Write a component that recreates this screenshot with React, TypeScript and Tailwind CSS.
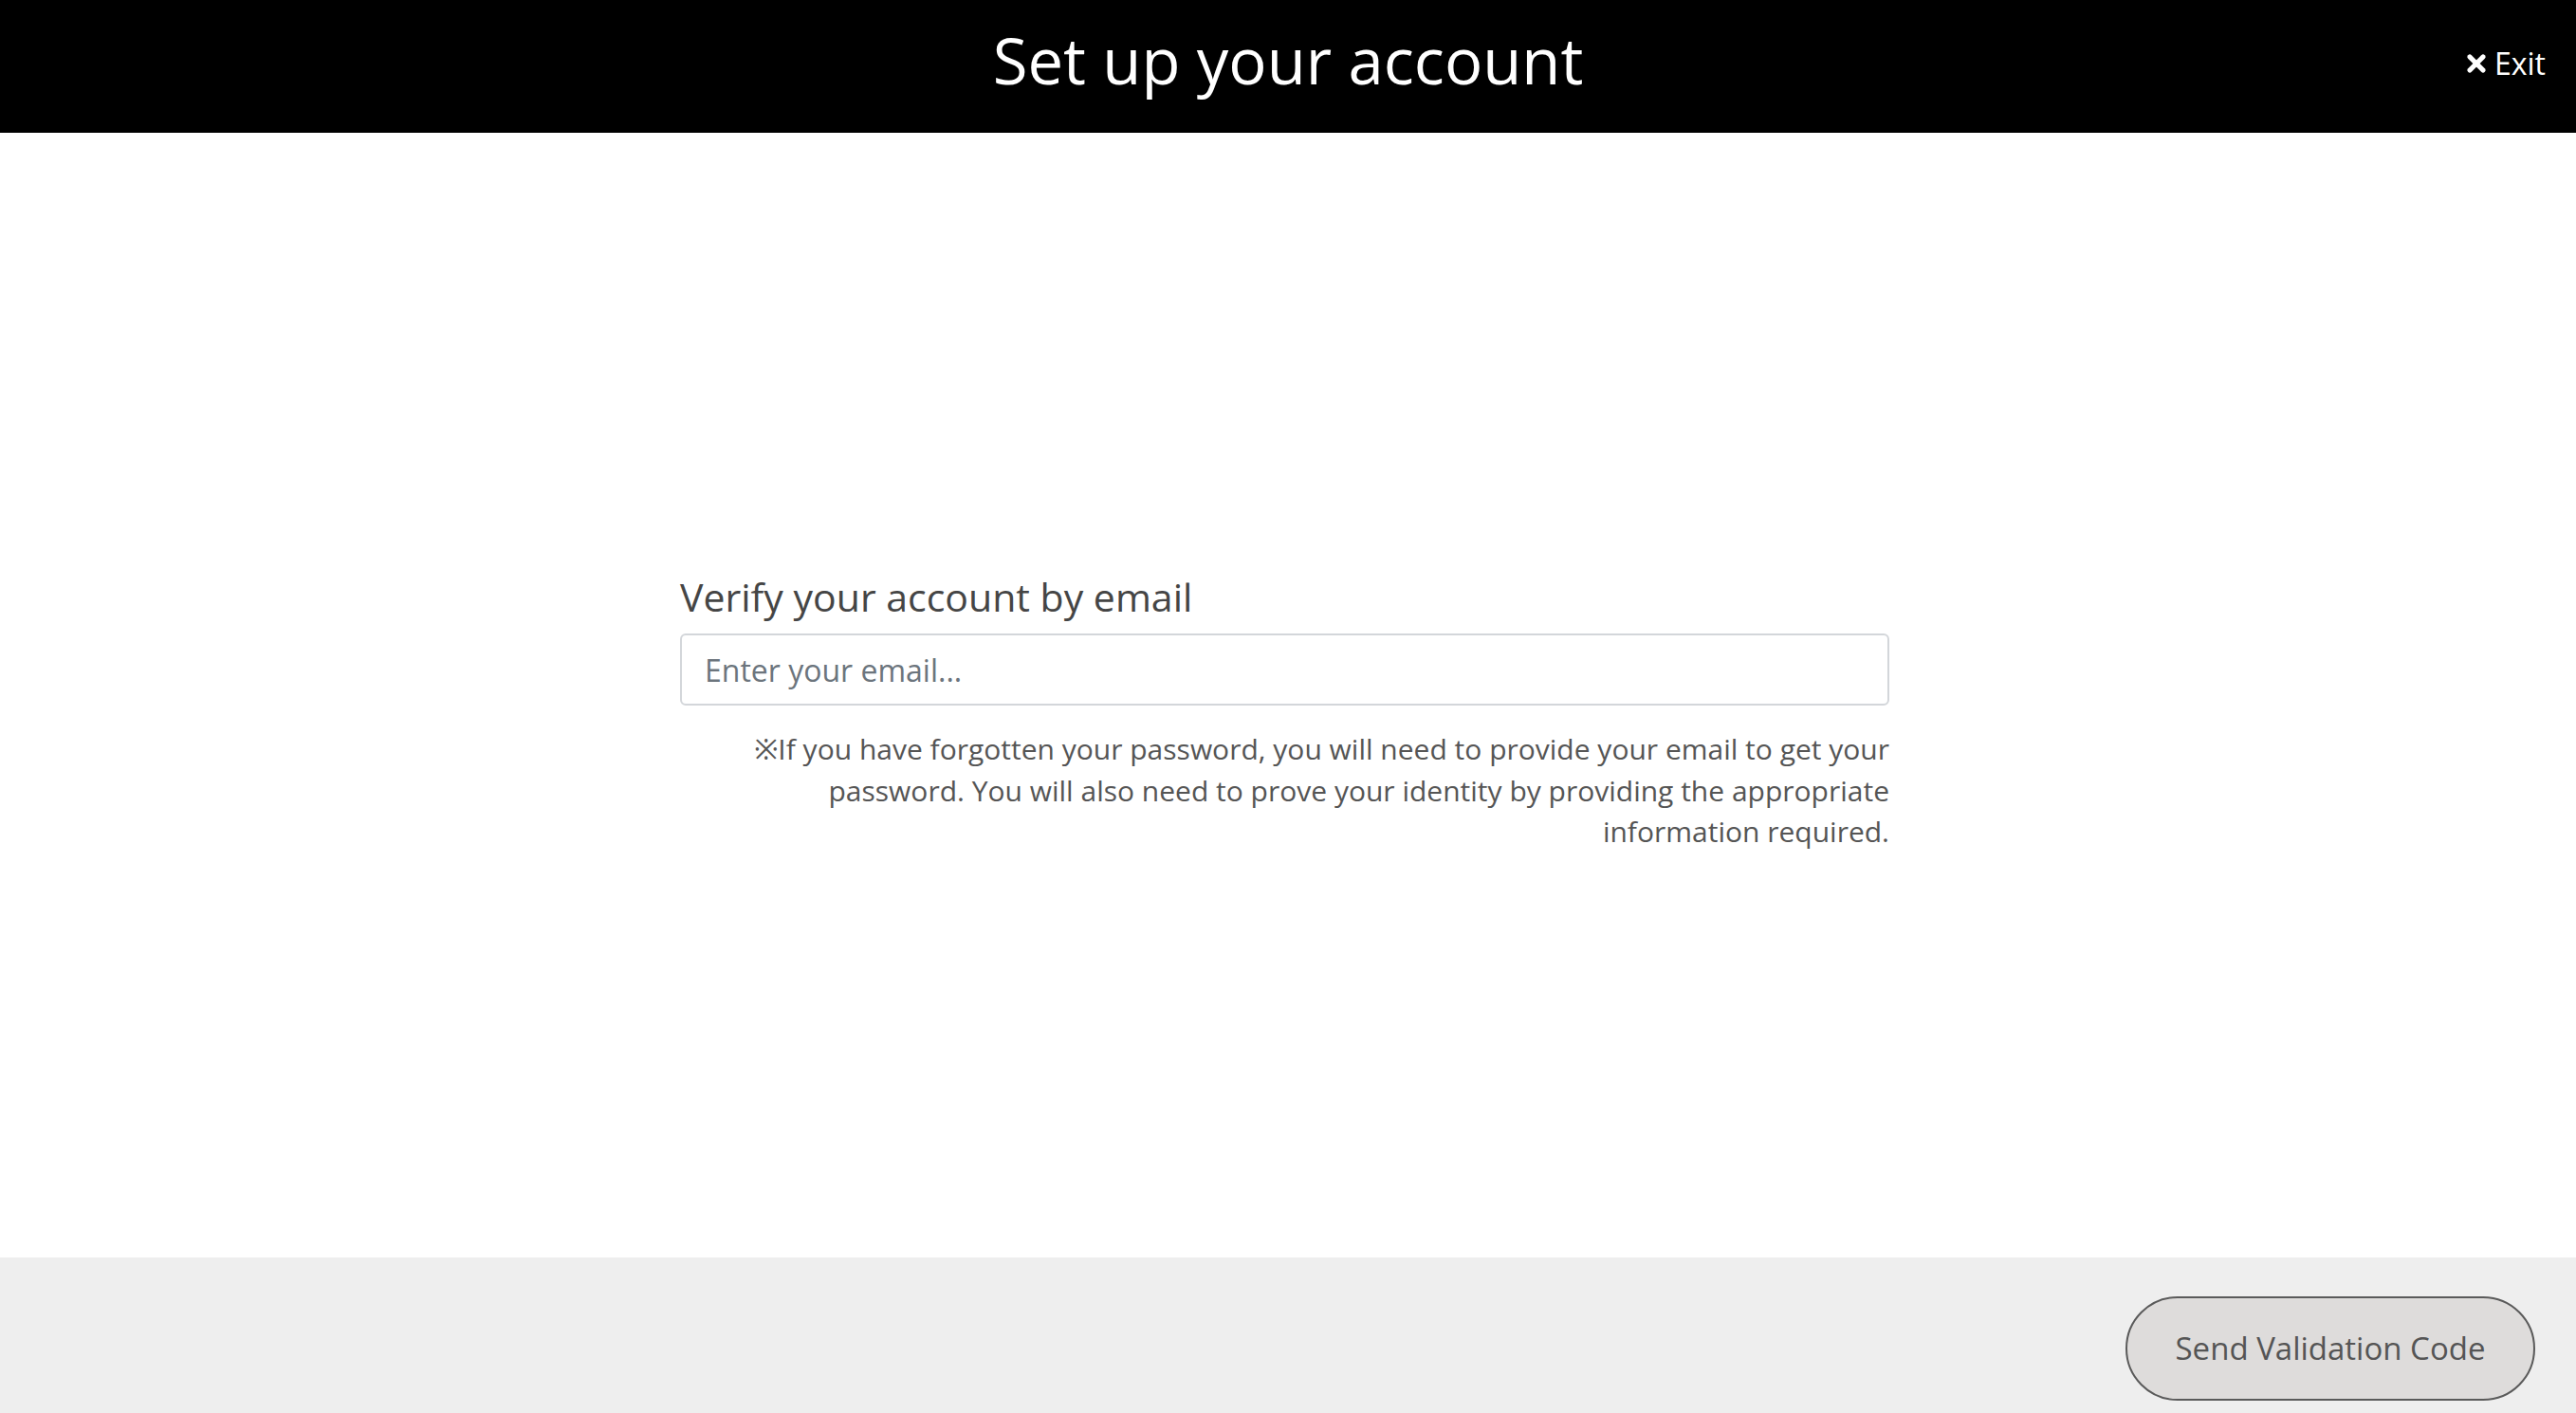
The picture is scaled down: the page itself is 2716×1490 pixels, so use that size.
import { X } from "lucide-react";

export default function App() {
    return (
        <div className="flex h-[1490px] w-full flex-col font-['Open_Sans','Noto_Sans',sans-serif]">
            <header className="grid h-[140px] grid-cols-[1fr_auto_1fr] items-center bg-black">
                <div />
                <h1 className="pb-[14px] text-[67px] leading-none text-white">Set up your account</h1>
                <div className="flex justify-end pr-[32px]">
                    <button className="flex items-center gap-[5px] pb-[6px] text-[32px] text-white">
                        <X size={28} strokeWidth={4.5} />
                        Exit
                    </button>
                </div>
            </header>

            <main className="flex flex-1 flex-col items-center justify-center pr-[7px] pt-[36px]">
                <div className="w-[1275px]">
                    <label className="block text-[41px] leading-[1.3] text-[#454545]">
                        Verify your account by email
                    </label>
                    <input
                        type="email"
                        placeholder="Enter your email..."
                        className="mt-[12px] h-[76px] w-full rounded-[6px] border-2 border-[#d3d6da] px-[24px] text-[32px] text-[#444] placeholder:text-[#6c757d] focus:outline-none"
                    />
                    {/* note is right aligned, lines broken as in the design */}
                    <p className="mt-[24px] text-right text-[30px] leading-[43.5px] text-[#555]">
                        ※If you have forgotten your password, you will need to provide your email to get your
                        <br />
                        password. You will also need to prove your identity by providing the appropriate
                        <br />
                        information required.
                    </p>
                </div>
            </main>

            <footer className="flex h-[164px] justify-end bg-[#eeeeee] pr-[43px] pt-[41px]">
                <button className="h-[110px] w-[432px] rounded-full border-2 border-[#5a5a5a] bg-[#dedcdb] text-[33px] text-[#555]">
                    Send Validation Code
                </button>
            </footer>
        </div>
    );
}
